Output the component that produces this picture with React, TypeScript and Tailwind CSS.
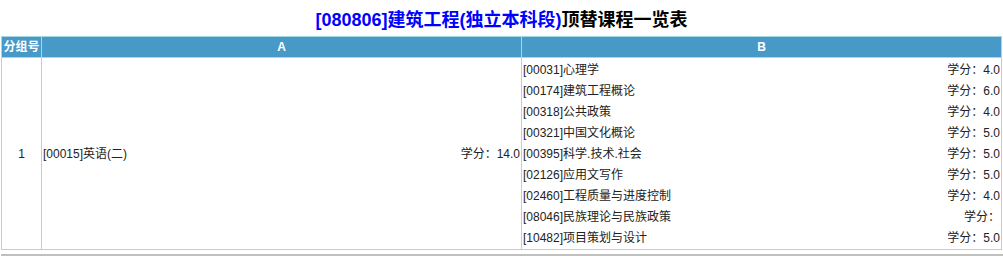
const COURSES_B = [
  { code: '00031', name: '心理学', credit: '4.0' },
  { code: '00174', name: '建筑工程概论', credit: '6.0' },
  { code: '00318', name: '公共政策', credit: '4.0' },
  { code: '00321', name: '中国文化概论', credit: '5.0' },
  { code: '00395', name: '科学.技术.社会', credit: '5.0' },
  { code: '02126', name: '应用文写作', credit: '5.0' },
  { code: '02460', name: '工程质量与进度控制', credit: '4.0' },
  { code: '08046', name: '民族理论与民族政策', credit: '' },
  { code: '10482', name: '项目策划与设计', credit: '5.0' },
]

const font = { fontFamily: '"Liberation Sans", "Noto Sans CJK SC", sans-serif' }

export default function App() {
  return (
    <div className="w-[1003px] h-[256px] bg-white overflow-hidden" style={font}>
      <h1 className="h-[36px] flex items-center justify-center text-[18px] font-bold pt-[4px]">
        <span className="text-[#0000ff]">[080806]建筑工程(独立本科段)</span>
        <span className="text-black">顶替课程一览表</span>
      </h1>
      <div className="px-[1px]">
        <table className="w-[1000px] table-fixed text-[12px] text-[#222]">
          <colgroup>
            <col className="w-[40px]" />
            <col className="w-[480px]" />
            <col className="w-[480px]" />
          </colgroup>
          <thead>
            <tr className="h-[21px] bg-[#4799c8] text-white font-bold">
              <th className="border border-[#a9d6e3] px-0">分组号</th>
              <th className="border border-[#a9d6e3]">A</th>
              <th className="border border-[#a9d6e3]">B</th>
            </tr>
          </thead>
          <tbody>
            <tr>
              <td className="border border-[#a9d6e3] text-center align-middle">1</td>
              <td className="border border-[#a9d6e3] align-middle px-[1px]">
                <div className="flex justify-between">
                  <span>[00015]英语(二)</span>
                  <span>学分：14.0</span>
                </div>
              </td>
              <td className="border border-[#a9d6e3] px-[1px] py-[1px]">
                {COURSES_B.map((c) => (
                  <div key={c.code} className="h-[21px] flex items-center justify-between">
                    <span>[{c.code}]{c.name}</span>
                    <span>学分：{c.credit}</span>
                  </div>
                ))}
              </td>
            </tr>
          </tbody>
        </table>
      </div>
      <div className="mt-[4px] ml-[1px] h-[3px] bg-[#c0c0c0]" />
    </div>
  )
}
